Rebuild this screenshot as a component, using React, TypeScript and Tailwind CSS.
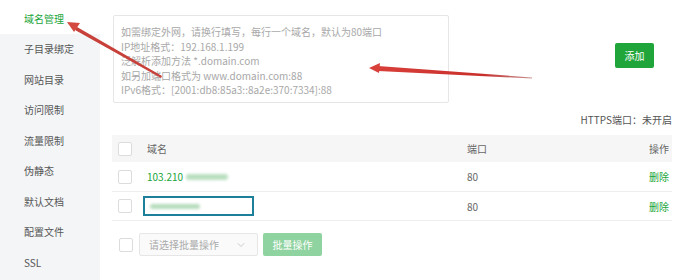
import { ChevronDown } from "lucide-react";

const menu = [
  "域名管理",
  "子目录绑定",
  "网站目录",
  "访问限制",
  "流量限制",
  "伪静态",
  "默认文档",
  "配置文件",
  "SSL",
];

const hintLines = [
  "如需绑定外网，请换行填写，每行一个域名，默认为80端口",
  "IP地址格式：192.168.1.199",
  "泛解析添加方法 *.domain.com",
  "如另加端口格式为 www.domain.com:88",
  "IPv6格式：[2001:db8:85a3::8a2e:370:7334]:88",
];

function Checkbox() {
  return <span className="block h-[14px] w-[14px] rounded-[2px] border border-[#dcdcdc] bg-white" />;
}

function Arrows() {
  return (
    <svg className="pointer-events-none absolute inset-0" width="680" height="280">
      <defs>
        <linearGradient id="g2" x1="370" y1="68" x2="532" y2="78" gradientUnits="userSpaceOnUse">
          <stop offset="0" stopColor="#d9403a" />
          <stop offset="0.7" stopColor="#c9302c" />
          <stop offset="1" stopColor="#9a2a2a" stopOpacity="0.5" />
        </linearGradient>
      </defs>
      {/* arrow to sidebar */}
      <polygon points="77,27 162,76 161,78 75,30" fill="#c8403a" />
      <polygon points="67,22 80,23 74,32" fill="#d44a40" />
      {/* arrow to textarea */}
      <polygon points="378,66 532,77.5 532,78.5 378,71" fill="url(#g2)" />
      <polygon points="369,68 380,63 379,73" fill="#d9403a" />
    </svg>
  );
}

export default function App() {
  return (
    <div
      className="relative flex h-[280px] w-[680px] overflow-hidden bg-white text-[10px] text-[#555]"
      style={{ fontFamily: '"Microsoft YaHei", "Noto Sans CJK SC", sans-serif' }}
    >
      <aside className="w-[100px] shrink-0 bg-[#f4f5f7] text-[10px]">
        {menu.map((item, i) => (
          <div
            key={item}
            className={
              i === 0
                ? "flex h-[33.5px] items-center bg-white pl-[24px] pt-[3px] text-[#20a53a]"
                : "flex h-[30.5px] items-center pl-[24px] text-[#555]"
            }
          >
            {item}
          </div>
        ))}
      </aside>

      <main className="flex flex-1 flex-col pl-[12px] pr-[8px] pt-[15px]">
        <div className="flex items-start">
          <div className="ml-[1px] h-[88px] w-[336px] rounded-[2px] border border-[#e6e6e6] px-[7px] pt-[9px] text-[10px] leading-[14.5px] text-[#a8a8a8]">
            {hintLines.map((l) => (
              <div key={l} className="whitespace-nowrap">
                {l}
              </div>
            ))}
          </div>
          <button className="ml-auto mr-[18px] mt-[28px] h-[25px] w-[39px] rounded-[2px] bg-[#20a53a] text-[10px] text-white">
            添加
          </button>
        </div>

        <div className="mt-[10px] h-[14px] text-right text-[10px] leading-[14px] text-[#555]">
          HTTPS端口：未开启
        </div>

        <div className="mt-[8px]">
          <div className="flex h-[27px] items-center bg-[#f6f6f6]">
            <div className="w-[35px] pl-[6px]">
              <Checkbox />
            </div>
            <div className="w-[320px] text-[#666]">域名</div>
            <div className="flex-1 text-[#666]">端口</div>
            <div className="pr-[3px] text-[#666]">操作</div>
          </div>
          <div className="flex h-[30px] items-center border-b border-[#eeeeee]">
            <div className="w-[35px] pl-[6px]">
              <Checkbox />
            </div>
            <div className="flex w-[320px] items-center text-[#20a53a]">
              <span>103.210</span>
              <span className="ml-[3px] h-[6px] w-[42px] rounded-sm bg-[#b8dfbf] blur-[1.5px]" />
            </div>
            <div className="flex-1 text-[#666]">80</div>
            <div className="pr-[3px] text-[#20a53a]">删除</div>
          </div>
          <div className="flex h-[29px] items-center border-b border-[#eeeeee]">
            <div className="w-[35px] pl-[6px]">
              <Checkbox />
            </div>
            <div className="w-[320px]">
              <div className="-ml-[4px] flex h-[20px] w-[111px] items-center border-2 border-[#1d7f9a] pl-[5px]">
                <span className="h-[5px] w-[50px] rounded-sm bg-[#b5dcbc] blur-[1.5px]" />
              </div>
            </div>
            <div className="flex-1 text-[#666]">80</div>
            <div className="pr-[3px] text-[#20a53a]">删除</div>
          </div>
        </div>

        <div className="mt-[12px] flex items-center">
          <div className="w-[27px] pl-[7px]">
            <Checkbox />
          </div>
          <div className="flex h-[23px] w-[119px] items-center justify-between rounded-[2px] border border-[#e6e6e6] bg-[#fafafa] pl-[9px] pr-[10px] text-[#aaa]">
            <span>请选择批量操作</span>
            <ChevronDown size={12} strokeWidth={1.5} className="text-[#bbb]" />
          </div>
          <button className="ml-[5px] h-[23px] w-[59px] rounded-[2px] bg-[#8fd3a0] text-white">
            批量操作
          </button>
        </div>
      </main>

      <Arrows />
    </div>
  );
}
